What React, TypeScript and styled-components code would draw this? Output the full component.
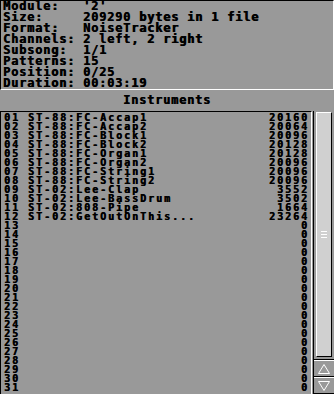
import styled, { createGlobalStyle } from "styled-components";

const GlobalStyle = createGlobalStyle`
  html, body {
    margin: 0;
    padding: 0;
    background: #999999;
  }
`;

interface Instrument {
  name: string;
  size: number;
}

const info: [string, string][] = [
  ["Module:", "'2'"],
  ["Size:", "209290 bytes in 1 file"],
  ["Format:", "NoiseTracker"],
  ["Channels:", "2 left, 2 right"],
  ["Subsong:", "1/1"],
  ["Patterns:", "15"],
  ["Position:", "0/25"],
  ["Duration:", "00:03:19"],
];

const named: Instrument[] = [
  { name: "ST-88:FC-Accap1", size: 20160 },
  { name: "ST-88:FC-Accap2", size: 20064 },
  { name: "ST-88:FC-Block1", size: 20096 },
  { name: "ST-88:FC-Block2", size: 20128 },
  { name: "ST-88:FC-Organ1", size: 20128 },
  { name: "ST-88:FC-Organ2", size: 20096 },
  { name: "ST-88:FC-String1", size: 20096 },
  { name: "ST-88:FC-String2", size: 20096 },
  { name: "ST-02:Lee-Clap", size: 3552 },
  { name: "ST-02:Lee-BassDrum", size: 3502 },
  { name: "ST-02:808-Pipe", size: 1664 },
  { name: "ST-02:GetOutOnThis...", size: 23264 },
];

// 31 sample slots, the unused ones are empty with size 0
const instruments: Instrument[] = Array.from({ length: 31 }, (_, i) => named[i] ?? { name: "", size: 0 });

const App = () => {
  return (
    <>
      <GlobalStyle />
      <Screen>
        <InfoPanel>
          {info.map(([label, value]) => (
            <InfoRow key={label}>
              <span>{label}</span>
              <span>{value}</span>
            </InfoRow>
          ))}
        </InfoPanel>
        <Heading>Instruments</Heading>
        <ListArea>
          <List>
            {instruments.map((ins, i) => (
              <Row key={i}>
                <Num>{String(i + 1).padStart(2, "0")}</Num>
                <Name>{ins.name}</Name>
                <Size>{ins.size}</Size>
              </Row>
            ))}
          </List>
          <Scrollbar>
            <Track>
              <Knob>
                <Grip>
                  <i />
                  <i />
                  <i />
                </Grip>
              </Knob>
            </Track>
            <ArrowButton>
              <svg width="14" height="12" viewBox="0 0 14 12">
                <path d="M7 1.5 L12.5 10.5 L1.5 10.5 Z" fill="none" stroke="#ffffff" strokeWidth="1" />
              </svg>
            </ArrowButton>
            <ArrowButton>
              <svg width="14" height="12" viewBox="0 0 14 12">
                <path d="M1.5 1.5 L12.5 1.5 L7 10.5 Z" fill="none" stroke="#ffffff" strokeWidth="1" />
              </svg>
            </ArrowButton>
          </Scrollbar>
        </ListArea>
      </Screen>
    </>
  );
};

export default App;

const Screen = styled.div`
  width: 334px;
  height: 394px;
  overflow: hidden;
  background: #999999;
  color: #000000;
  font-family: "DejaVu Sans Mono", "Liberation Mono", monospace;
  font-weight: bold;
  display: flex;
  flex-direction: column;
  text-shadow: 0.6px 0 0 #000;
`;

const InfoPanel = styled.div`
  height: 88px;
  border-top: 1px solid #000;
  border-left: 1px solid #000;
  border-bottom: 1px solid #fff;
  border-right: 1px solid #fff;
  padding: 0 0 0 2px;
`;

const InfoRow = styled.div`
  display: grid;
  grid-template-columns: 80px 1fr;
  height: 11px;
  line-height: 11px;
  font-size: 12px;
  letter-spacing: 0.78px;
  white-space: pre;
`;

const Heading = styled.div`
  height: 21px;
  line-height: 21px;
  text-align: center;
  font-size: 12px;
  letter-spacing: 0.78px;
`;

const ListArea = styled.div`
  flex: 1;
  display: flex;
  min-height: 0;
`;

const List = styled.div`
  width: 312px;
  border-top: 1px solid #000;
  border-left: 1px solid #000;
  border-right: 1px solid #fff;
  padding: 1px 0 0 3px;
  box-sizing: border-box;
`;

const Row = styled.div`
  display: flex;
  height: 9px;
  line-height: 9px;
  font-size: 10px;
  letter-spacing: 1.98px;
  white-space: pre;
`;

const Num = styled.span`
  width: 24px;
`;

const Name = styled.span`
  flex: 1;
`;

const Size = styled.span`
  margin-right: 2px;
`;

const Scrollbar = styled.div`
  width: 20px;
  margin-left: 1px;
  display: flex;
  flex-direction: column;
  border-left: 1px solid #000;
`;

const Track = styled.div`
  flex: 1;
  padding: 1px 2px 2px 2px;
  display: flex;
  border-bottom: 1px solid #000;
`;

const Knob = styled.div`
  flex: 1;
  background: #d0d0d0;
  border-top: 1px solid #fff;
  border-left: 1px solid #fff;
  border-right: 1px solid #000;
  border-bottom: 1px solid #000;
  display: flex;
  align-items: center;
  justify-content: center;
`;

const Grip = styled.div`
  display: flex;
  flex-direction: column;
  gap: 2px;

  i {
    display: block;
    width: 6px;
    height: 1px;
    background: #fff;
  }
`;

const ArrowButton = styled.div`
  height: 15px;
  border-top: 1px solid #fff;
  border-bottom: 1px solid #000;
  display: flex;
  align-items: center;
  justify-content: center;
`;
